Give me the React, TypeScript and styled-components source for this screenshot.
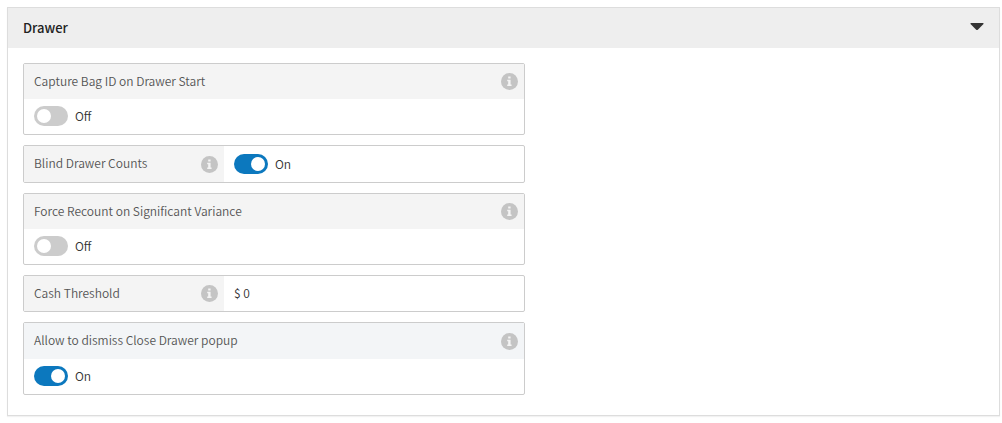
import React, { useId, useState } from "react";
import styled, { createGlobalStyle } from "styled-components";

const GlobalStyle = createGlobalStyle`
  *, *::before, *::after { box-sizing: border-box; }
  body {
    margin: 0;
    background: #fff;
    color: #333;
    font-family: "Noto Sans CJK SC", "Source Sans Pro", sans-serif;
    font-size: 12px;
    font-weight: 350;
    line-height: 18px;
  }
`;

const Page = styled.main`
  padding: 7px 2px 7px 7px;
`;

const Panel = styled.section`
  border: 1px solid #ddd;
  box-shadow: 0 1px 1px rgba(0, 0, 0, 0.05);
`;

const PanelHeader = styled.header`
  display: flex;
  align-items: center;
  justify-content: space-between;
  height: 40px;
  padding: 0 15px;
  background: #eee;
`;

const PanelTitle = styled.h2`
  margin: 0;
  font-size: 13px;
  font-weight: 500;
  color: #222;
`;

const CollapseButton = styled.button`
  display: flex;
  padding: 0 0 2px;
  border: 0;
  background: none;
  color: #333;
  cursor: pointer;
`;

const PanelBody = styled.div`
  display: flex;
  flex-direction: column;
  gap: 10px;
  padding: 15px 15px 20px;
`;

const Card = styled.div<{ $inline?: boolean }>`
  display: flex;
  flex-direction: ${(p) => (p.$inline ? "row" : "column")};
  width: 100%;
  max-width: 502px;
  border: 1px solid #ccc;
  border-radius: 2px;
`;

const CardLabel = styled.div<{ $inline?: boolean; $tall?: boolean; $tint?: boolean }>`
  display: flex;
  align-items: center;
  justify-content: space-between;
  flex: none;
  width: ${(p) => (p.$inline ? "200px" : "auto")};
  height: ${(p) => (p.$tall ? "36px" : "35px")};
  padding: 0 6px 0 10px;
  background: ${(p) => (p.$tint ? "#f3f5f7" : "#f4f4f4")};
  color: #555;
`;

const LabelText = styled.label`
  padding-bottom: 2px;
`;

const CardValue = styled.div<{ $inline?: boolean }>`
  display: flex;
  flex: 1;
  align-items: center;
  min-height: 35px;
  padding: ${(p) => (p.$inline ? "0 10px" : "0 10px 2px")};
`;

const InfoButton = styled.button`
  display: flex;
  padding: 0;
  border: 0;
  background: none;
  color: #c4c4c4;
  cursor: help;
`;

const Switch = styled.input`
  appearance: none;
  display: flex;
  align-items: center;
  flex: none;
  width: 34px;
  height: 20px;
  margin: 0 7px 0 0;
  padding: 0 3px;
  border-radius: 10px;
  background: #ccc;
  cursor: pointer;

  &::before {
    content: "";
    width: 14px;
    height: 14px;
    border-radius: 50%;
    background: #fff;
  }

  &:checked {
    justify-content: flex-end;
    background: #0c78be;
  }
`;

const AmountInput = styled.input`
  width: 100%;
  padding: 0 0 2px;
  border: 0;
  outline: 0;
  background: none;
  color: #333;
  font: inherit;
`;

function Info({ about }: { about: string }) {
  return (
    <InfoButton type="button" aria-label={`About ${about}`}>
      <svg width="17" height="17" viewBox="0 0 17 17" aria-hidden="true">
        <circle cx="8.5" cy="8.5" r="8.5" fill="currentColor" />
        <path d="M7.2 3.4h2.4v2H7.2zM6.2 6.8h3.4v4.7h1v1.4H6.2v-1.4h1V8.2h-1z" fill="#f4f4f4" />
      </svg>
    </InfoButton>
  );
}

interface SettingProps {
  label: string;
  inline?: boolean;
  tall?: boolean;
  tint?: boolean;
}

function Setting({
  id,
  label,
  inline,
  tall,
  tint,
  children,
}: SettingProps & { id: string; children: React.ReactNode }) {
  return (
    <Card $inline={inline}>
      <CardLabel $inline={inline} $tall={tall} $tint={tint}>
        <LabelText htmlFor={id}>{label}</LabelText>
        <Info about={label} />
      </CardLabel>
      <CardValue $inline={inline}>{children}</CardValue>
    </Card>
  );
}

function ToggleSetting({ initial = false, ...rest }: SettingProps & { initial?: boolean }) {
  const id = useId();
  const [on, setOn] = useState(initial);
  return (
    <Setting id={id} {...rest}>
      <Switch
        id={id}
        type="checkbox"
        role="switch"
        checked={on}
        onChange={(e) => setOn(e.target.checked)}
      />
      <span>{on ? "On" : "Off"}</span>
    </Setting>
  );
}

function AmountSetting({ initial, ...rest }: SettingProps & { initial: string }) {
  const id = useId();
  const [value, setValue] = useState(initial);
  return (
    <Setting id={id} {...rest}>
      <AmountInput id={id} type="text" value={value} onChange={(e) => setValue(e.target.value)} />
    </Setting>
  );
}

export default function App() {
  const [open, setOpen] = useState(true);
  return (
    <Page>
      <GlobalStyle />
      <Panel>
        <PanelHeader>
          <PanelTitle>Drawer</PanelTitle>
          <CollapseButton
            type="button"
            aria-label="Toggle Drawer section"
            aria-expanded={open}
            onClick={() => setOpen(!open)}
          >
            <svg width="14" height="8" viewBox="0 0 14 8" aria-hidden="true">
              <path d="M1 0h12q1 .3.5 1.1L7.8 6.7q-.8.7-1.6 0L.5 1.1Q0 .3 1 0z" fill="currentColor" />
            </svg>
          </CollapseButton>
        </PanelHeader>
        {open && (
          <PanelBody>
            <ToggleSetting label="Capture Bag ID on Drawer Start" />
            <ToggleSetting label="Blind Drawer Counts" inline tall initial />
            <ToggleSetting label="Force Recount on Significant Variance" />
            <AmountSetting label="Cash Threshold" inline initial="$ 0" />
            <ToggleSetting label="Allow to dismiss Close Drawer popup" tall tint initial />
          </PanelBody>
        )}
      </Panel>
    </Page>
  );
}
